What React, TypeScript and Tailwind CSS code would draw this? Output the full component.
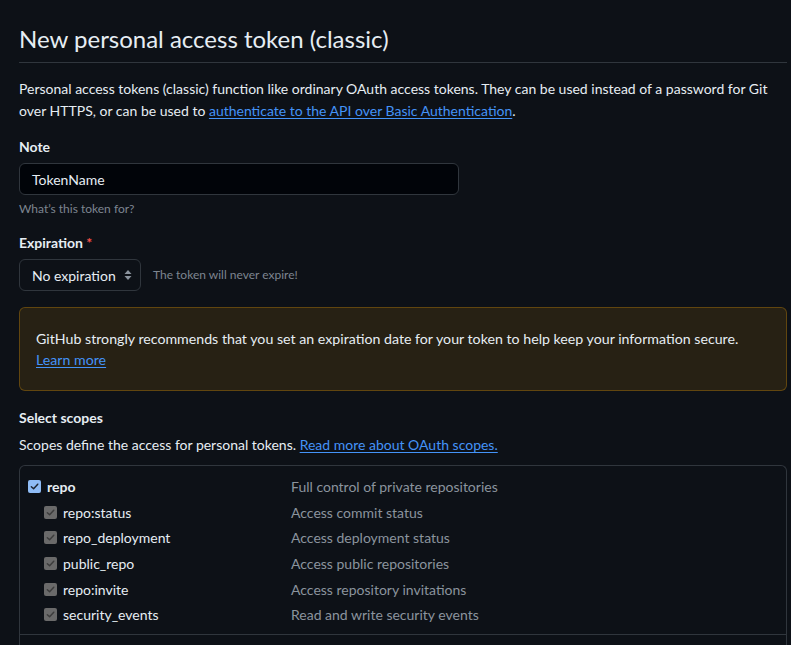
import React from 'react';

// --- DATA ---
interface Scope {
    name: string;
    description: string;
    parent?: boolean;
}

const scopes: Scope[] = [
    { name: 'repo', description: 'Full control of private repositories', parent: true },
    { name: 'repo:status', description: 'Access commit status' },
    { name: 'repo_deployment', description: 'Access deployment status' },
    { name: 'public_repo', description: 'Access public repositories' },
    { name: 'repo:invite', description: 'Access repository invitations' },
    { name: 'security_events', description: 'Read and write security events' },
];

// --- SMALL PIECES ---
const CheckBox = ({ disabled }: { disabled?: boolean }) => (
    <span
        className={
            disabled
                ? 'flex h-[13px] w-[13px] items-center justify-center rounded-[2px] bg-[#6a6a6a]'
                : 'flex h-[13px] w-[13px] items-center justify-center rounded-[2px] bg-[#8fbcf5]'
        }
    >
        <svg width="9" height="9" viewBox="0 0 10 10" fill="none">
            <path
                d="M1.5 5.2 L4 7.6 L8.6 2.4"
                stroke={disabled ? '#3c3c3c' : '#1e2530'}
                strokeWidth="1.6"
                strokeLinecap="round"
                strokeLinejoin="round"
            />
        </svg>
    </span>
);

const SelectArrows = () => (
    <svg width="8" height="12" viewBox="0 0 8 12" fill="#8b949e">
        <path d="M4 1 L7.5 5 H0.5 Z" />
        <path d="M4 11 L0.5 7 H7.5 Z" />
    </svg>
);

// --- MAIN PAGE ---
export default function App() {
    return (
        <div className="min-h-[645px] bg-[#0d1117] text-[#e6edf3] font-['Lato',sans-serif] text-[14px] overflow-hidden">
            <div className="ml-[19px] w-[768px]">
                {/* Header */}
                <div className="mt-[24px] border-b border-[#30363d] pb-[8px]">
                    <h1 className="text-[24px] leading-[30px] font-normal">New personal access token (classic)</h1>
                </div>

                <p className="mt-[15px] leading-[22px]">
                    Personal access tokens (classic) function like ordinary OAuth access tokens. They can be used instead of a password for Git over HTTPS, or can be used to{' '}
                    <a className="text-[#4493f8] underline underline-offset-2">authenticate to the API over Basic Authentication</a>.
                </p>

                {/* Note */}
                <div className="mt-[14px] font-bold leading-[21px]">Note</div>
                <div className="mt-[6px] flex h-[32px] w-[440px] items-center rounded-[6px] border border-[#30363d] bg-[#010409] px-[12px]">
                    TokenName
                </div>
                <div className="mt-[5px] text-[12px] leading-[18px] text-[#7d8590]">What’s this token for?</div>

                {/* Expiration */}
                <div className="mt-[14px] font-bold leading-[21px]">
                    Expiration <span className="text-[#f85149]">*</span>
                </div>
                <div className="mt-[6px] flex items-center gap-[12px]">
                    <div className="flex h-[32px] w-[122px] items-center justify-between rounded-[6px] border border-[#30363d] bg-[#0d1117] pl-[12px] pr-[8px]">
                        <span>No expiration</span>
                        <SelectArrows />
                    </div>
                    <span className="text-[12px] text-[#7d8590]">The token will never expire!</span>
                </div>

                {/* Flash warning */}
                <div className="mt-[16px] rounded-[6px] border border-[#bb800966] bg-[#bb800926] px-[16px] py-[20px] leading-[21px]">
                    <p className="text-[14.2px]">GitHub strongly recommends that you set an expiration date for your token to help keep your information secure.</p>
                    <a className="text-[14.2px] text-[#4493f8] underline underline-offset-2">Learn more</a>
                </div>

                {/* Scopes */}
                <div className="mt-[16px] font-bold leading-[21px]">Select scopes</div>
                <p className="mt-[6px] leading-[21px]">
                    Scopes define the access for personal tokens.{' '}
                    <a className="text-[#4493f8] underline underline-offset-2">Read more about OAuth scopes.</a>
                </p>

                <div className="mt-[10px] rounded-t-[6px] border border-b-0 border-[#30363d] h-[200px]">
                    <div className="border-b border-[#30363d] pt-[8px] pb-[6px]">
                        {scopes.map((s) => (
                            <div key={s.name} className="flex h-[25.6px] items-center">
                                <div className={s.parent ? 'flex w-[271px] items-center gap-[6px] pl-[8px]' : 'flex w-[271px] items-center gap-[6px] pl-[24px]'}>
                                    <CheckBox disabled={!s.parent} />
                                    <span className={s.parent ? 'font-bold' : ''}>{s.name}</span>
                                </div>
                                <span className="text-[#8b949e]">{s.description}</span>
                            </div>
                        ))}
                    </div>
                </div>
            </div>
        </div>
    );
}
